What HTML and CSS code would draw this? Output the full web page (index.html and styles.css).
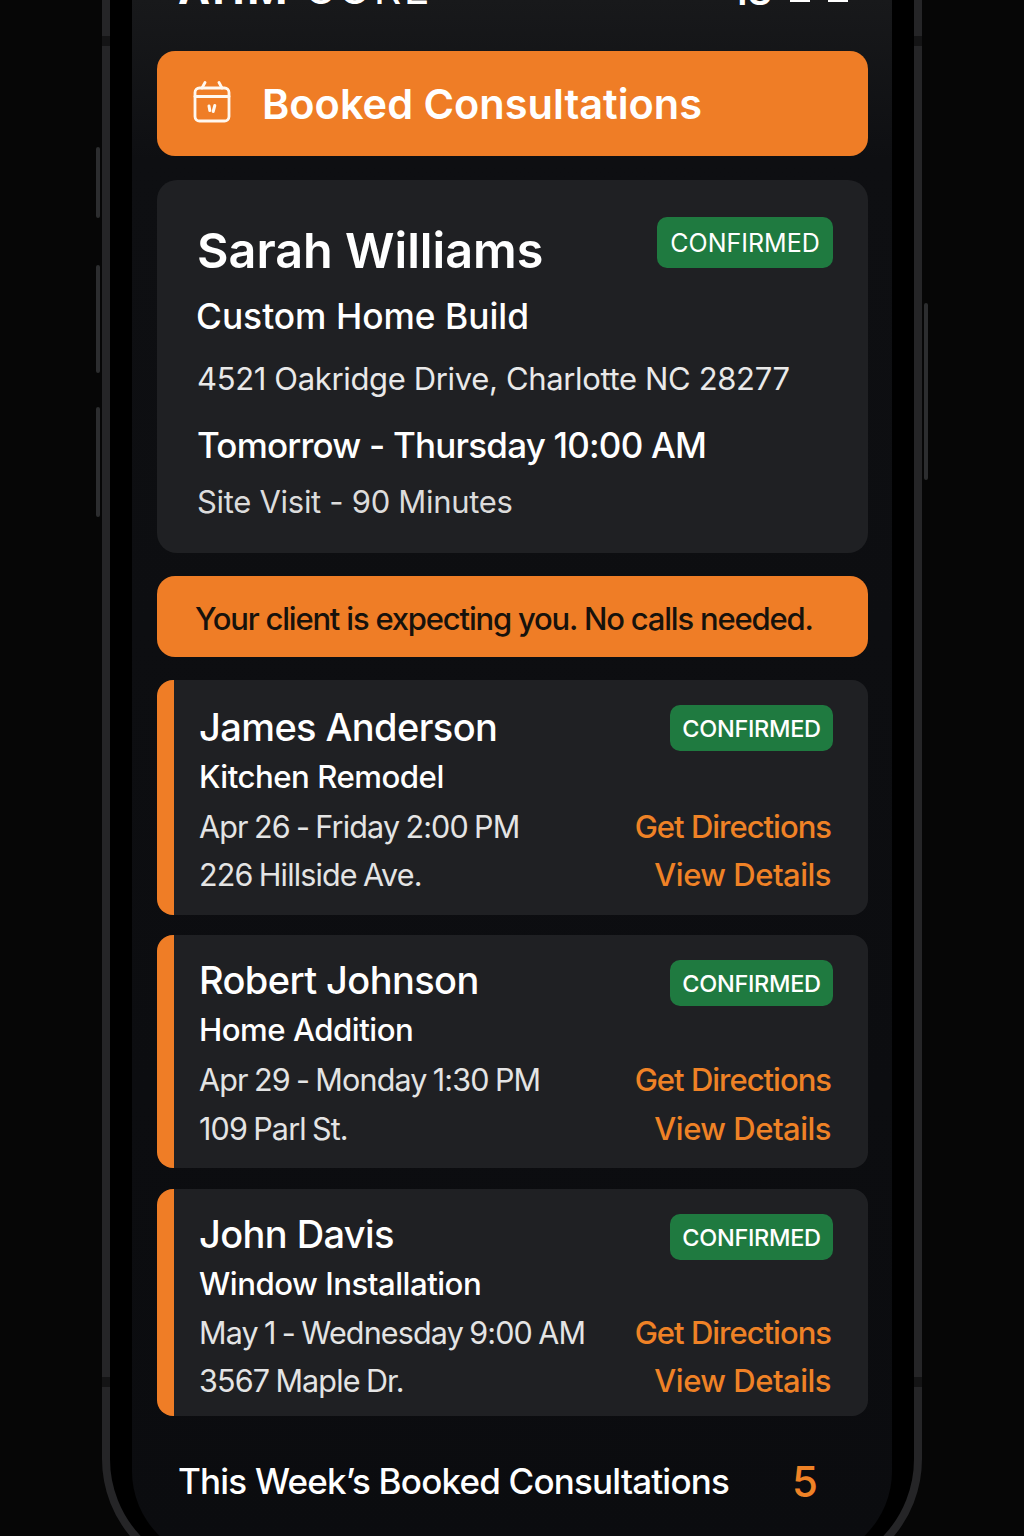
FILE: index.html
```html
<!DOCTYPE html>
<html>
<head>
<meta charset="utf-8">
<title>Booked Consultations</title>
<link rel="stylesheet" href="styles.css">
</head>
<body>
<div class="phone">
  <span class="side-btn btn-1"></span>
  <span class="side-btn btn-2"></span>
  <span class="side-btn btn-3"></span>
  <span class="side-btn btn-4"></span>
  <span class="rim-band band-tl"></span>
  <span class="rim-band band-tr"></span>
  <span class="rim-band band-bl"></span>
  <span class="rim-band band-br"></span>

  <div class="screen">
    <div class="status">
      <div class="brand"><b>AHM</b> CORE</div>
      <div class="status-right">
        <span>18</span>
        <i class="block"></i>
        <i class="block"></i>
      </div>
    </div>

    <div class="title-bar">
      <svg class="cal-icon" viewBox="0 0 40 42" width="40" height="42" fill="none" stroke="#fff8f0" stroke-width="2.8" stroke-linecap="round" stroke-linejoin="round">
        <rect x="3" y="7" width="34" height="33" rx="4.5"/>
        <path d="M3 15.5H37"/>
        <path d="M13 1.5L10 7M27 1.5L30 7"/>
        <path d="M17 25L17.8 29.5M22.8 24.5L21.2 30.5" stroke-width="3"/>
      </svg>
      <h1>Booked Consultations</h1>
    </div>

    <div class="next-card">
      <div class="next-top">
        <div class="next-name">Sarah Williams</div>
        <div class="badge badge-lg">CONFIRMED</div>
      </div>
      <div class="next-type">Custom Home Build</div>
      <div class="next-addr">4521 Oakridge Drive, Charlotte NC 28277</div>
      <div class="next-when">Tomorrow - Thursday 10:00 AM</div>
      <div class="next-len">Site Visit - 90 Minutes</div>
    </div>

    <div class="notice">Your client is expecting you. No calls needed.</div>

    <div class="booking booking-a">
      <div class="row row-name"><span class="name">James Anderson</span><span class="badge">CONFIRMED</span></div>
      <div class="row row-type"><span class="type">Kitchen Remodel</span></div>
      <div class="row row-date"><span class="info">Apr 26 - Friday 2:00 PM</span><a class="link">Get Directions</a></div>
      <div class="row row-addr"><span class="info">226 Hillside Ave.</span><a class="link">View Details</a></div>
    </div>

    <div class="booking booking-b">
      <div class="row row-name"><span class="name">Robert Johnson</span><span class="badge">CONFIRMED</span></div>
      <div class="row row-type"><span class="type">Home Addition</span></div>
      <div class="row row-date"><span class="info">Apr 29 - Monday 1:30 PM</span><a class="link">Get Directions</a></div>
      <div class="row row-addr"><span class="info">109 Parl St.</span><a class="link">View Details</a></div>
    </div>

    <div class="booking booking-c">
      <div class="row row-name"><span class="name">John Davis</span><span class="badge">CONFIRMED</span></div>
      <div class="row row-type"><span class="type">Window Installation</span></div>
      <div class="row row-date"><span class="info">May 1 - Wednesday 9:00 AM</span><a class="link">Get Directions</a></div>
      <div class="row row-addr"><span class="info">3567 Maple Dr.</span><a class="link">View Details</a></div>
    </div>

    <div class="week">
      <span class="week-label">This Week&rsquo;s Booked Consultations</span>
      <span class="week-count">5</span>
    </div>
  </div>
</div>
</body>
</html>
```
FILE: styles.css
```css
html, body { margin: 0; padding: 0; }
body {
  height: 1536px;
  overflow: hidden;
  background: #060606;
  color: #fff;
  font-family: Inter, "Liberation Sans", sans-serif;
}

/* phone body runs off the top and bottom of the shot */
.phone {
  position: relative;
  box-sizing: border-box;
  width: 820px;
  margin: -200px auto 0;
  padding: 0 22px 10px;
  border: 8px solid #252527;
  border-radius: 120px;
  background: #000;
}
.side-btn { position: absolute; width: 4px; border-radius: 2px; background: #2c2d2f; }
.btn-1 { left: -14px; top: 339px; height: 71px; }
.btn-2 { left: -14px; top: 457px; height: 108px; }
.btn-3 { left: -14px; top: 599px; height: 110px; }
.btn-4 { right: -14px; top: 495px; height: 177px; }
.rim-band { position: absolute; width: 8px; height: 10px; background: #141415; }
.band-tl, .band-bl { left: -8px; }
.band-tr, .band-br { right: -8px; }
.band-tl, .band-tr { top: 228px; }
.band-bl, .band-br { top: 1569px; }

.screen {
  box-sizing: border-box;
  height: 1753px;
  padding: 0 24px 0 25px;
  border-radius: 90px;
  background: linear-gradient(#18191b 192px, #0e0f12 352px, #0b0c0f 100%);
}

.status {
  display: flex;
  justify-content: space-between;
  align-items: flex-end;
  box-sizing: border-box;
  height: 243px;
  padding: 0 20px 41px 21px;
  font-size: 38px;
  line-height: 1;
}
.brand { font-size: 43px; font-weight: 400; letter-spacing: 2.5px; }
.brand b { font-weight: 700; }
.status-right { display: flex; align-items: flex-end; gap: 18px; font-weight: 600; }
.block { display: block; width: 20px; height: 14px; margin-bottom: 8px; background: #fff; }

.title-bar {
  display: flex;
  align-items: center;
  gap: 30px;
  height: 105px;
  padding-left: 35px;
  border-radius: 18px;
  background: #ef7d26;
}
.cal-icon { flex: none; margin-top: -3px; }
.title-bar h1 { margin: 0; font-size: 41.5px; font-weight: 600; color: #fff; }

.next-card {
  box-sizing: border-box;
  height: 373px;
  margin-top: 24px;
  padding: 37px 35px 0 40px;
  border-radius: 20px;
  background: #1f2023;
}
.next-top { display: flex; justify-content: space-between; align-items: flex-start; height: 72px; }
.next-name { font-size: 48.5px; font-weight: 600; line-height: 68px; }
.next-type { font-size: 35.3px; font-weight: 500; line-height: 56px; margin-left: -1px; }
.next-addr { font-size: 31px; letter-spacing: -0.35px; line-height: 67px; color: #e9e9e9; }
.next-when { font-size: 35px; font-weight: 500; letter-spacing: -0.8px; line-height: 66px; }
.next-len { font-size: 31px; letter-spacing: -0.3px; line-height: 48px; color: #dcdcdc; }

.badge {
  box-sizing: border-box;
  display: flex;
  align-items: center;
  justify-content: center;
  width: 163px;
  height: 46px;
  margin-top: 2px;
  border-radius: 10px;
  background: #1f7a40;
  font-size: 23.5px;
  font-weight: 500;
  letter-spacing: -0.3px;
  color: #fff;
}
.badge-lg { width: 176px; height: 51px; margin-top: 0; font-size: 25px; font-weight: 400; letter-spacing: 0; }

.notice {
  height: 81px;
  margin-top: 23px;
  padding-left: 38px;
  border-radius: 18px;
  background: #ef7d26;
  font-size: 31px;
  font-weight: 500;
  letter-spacing: -1.2px;
  line-height: 85px;
  white-space: nowrap;
  color: #17120c;
}

.booking {
  box-sizing: border-box;
  padding-left: 42px;
  padding-right: 35px;
  border-radius: 16px;
  background: linear-gradient(to right, #ef7d26 17px, #1f2023 17px);
}
.row { display: flex; justify-content: space-between; align-items: center; }
.row-name { height: 50px; }
.row-type { height: 50px; }
.row-date { height: 49px; }
.row-addr { height: 46px; }
.name { font-size: 38px; font-weight: 500; letter-spacing: -0.6px; }
.type { font-size: 31.2px; font-weight: 500; letter-spacing: -0.5px; }
.info { font-size: 30.5px; letter-spacing: -0.85px; word-spacing: -1.5px; color: #e4e4e4; }
.link { margin-right: 2px; font-size: 31px; font-weight: 500; color: #ef8226; }
.row-date .link { letter-spacing: -1px; }
.row-addr .link { letter-spacing: -0.5px; }

.booking-a { height: 235px; margin-top: 23px; padding-top: 22px; }
.booking-b { height: 233px; margin-top: 20px; padding-top: 20px; }
.booking-b .row-name { height: 49px; }
.booking-b .row-type { height: 52px; }
.booking-b .row-date { height: 47px; }
.booking-b .row-addr { height: 50px; }
.booking-c { height: 227px; margin-top: 21px; padding-top: 20px; }
.booking-c .row-name { height: 49px; }
.booking-c .row-type { height: 52px; }
.booking-c .row-date { height: 44px; }
.booking-c .row-addr { height: 52px; }
.booking-b .badge, .booking-c .badge { margin-top: 7px; }

.week {
  display: flex;
  align-items: center;
  justify-content: space-between;
  height: 130px;
  padding: 0 50px 0 21px;
}
.week-label { font-size: 35px; font-weight: 500; letter-spacing: -0.8px; }
.week-count { font-size: 42px; font-weight: 500; color: #ef8226; }
```
